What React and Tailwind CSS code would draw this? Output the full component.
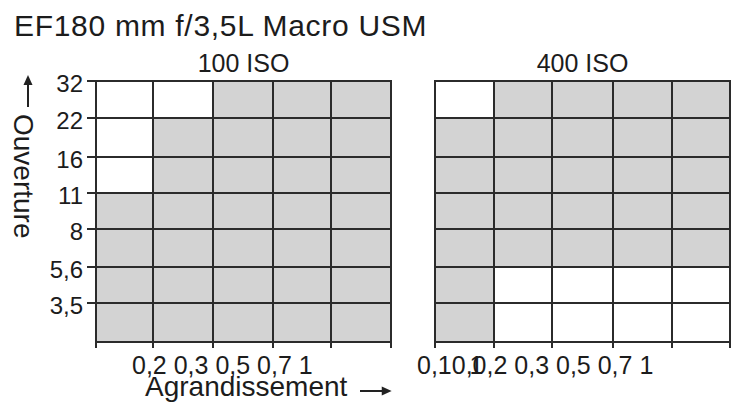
import React from 'react'

// 1 = grey cell (exposure ok), 0 = white
const leftCells = [
  [0, 0, 1, 1, 1],
  [0, 1, 1, 1, 1],
  [0, 1, 1, 1, 1],
  [1, 1, 1, 1, 1],
  [1, 1, 1, 1, 1],
  [1, 1, 1, 1, 1],
  [1, 1, 1, 1, 1],
]

const rightCells = [
  [0, 1, 1, 1, 1],
  [1, 1, 1, 1, 1],
  [1, 1, 1, 1, 1],
  [1, 1, 1, 1, 1],
  [1, 1, 1, 1, 1],
  [1, 0, 0, 0, 0],
  [1, 0, 0, 0, 0],
]

const apertures = ['32', '22', '16', '11', '8', '5,6', '3,5']

const Grid = ({ cells, cols }) => (
  <div className="bg-[#2b2b2b] pt-[2px] px-[2px]">
    <div className={`grid ${cols} grid-rows-[35px_37px_34px_34px_36px_34px_37px_5px] gap-[2px]`}>
      {cells.flat().map((c, i) => (
        <div key={i} className={c ? 'bg-[#d3d3d3]' : 'bg-white'} />
      ))}
      {[0, 1, 2, 3, 4].map((i) => (
        <div key={'t' + i} className="bg-white" />
      ))}
    </div>
  </div>
)

const ArrowUp = () => (
  <svg width="10" height="32" viewBox="0 0 10 32" className="ml-[23px] mt-[24px]">
    <line x1="5" y1="9" x2="5" y2="32" stroke="#222" strokeWidth="2" />
    <polygon points="5,0 9.5,10 0.5,10" fill="#222" />
  </svg>
)

const ArrowRight = () => (
  <svg width="32" height="10" viewBox="0 0 32 10" className="mt-[11px] ml-[13px]">
    <line x1="0" y1="5" x2="23" y2="5" stroke="#222" strokeWidth="2" />
    <polygon points="32,5 22,0.5 22,9.5" fill="#222" />
  </svg>
)

export default function App() {
  return (
    <div className="w-[734px] h-[409px] bg-white text-[#1c1c1c] font-['Liberation_Sans',Arial,sans-serif] overflow-hidden">
      <h1 className="pt-[11px] pl-[14px] text-[30px] leading-[30px] tracking-[0.7px] font-normal">
        EF180 mm f/3,5L Macro USM
      </h1>

      <div className="mt-[10px] flex items-start">
        {/* y axis title */}
        <div className="w-[40px] flex flex-col items-start">
          <ArrowUp />
          <div className="mt-[7px] ml-[9px] text-[28px] leading-[28px] [writing-mode:vertical-rl]">Ouverture</div>
        </div>

        {/* aperture labels + ticks */}
        <div className="w-[55px] mt-[18px] grid grid-rows-[37px_39px_36px_36px_38px_36px_24px]">
          {apertures.map((a) => (
            <div key={a} className="flex justify-end items-start gap-[4px]">
              <span className="text-[24px] leading-[24px] pt-[3px]">{a}</span>
              <span className="mt-[11px] w-[8px] h-[2px] bg-[#2b2b2b]" />
            </div>
          ))}
        </div>

        {/* 100 ISO */}
        <div className="w-[297px] flex flex-col">
          <div className="self-center text-[25px] leading-[25px]">100 ISO</div>
          <div className="mt-[4px]">
            <Grid cells={leftCells} cols="grid-cols-[55px_58px_58px_56px_58px]" />
          </div>
          <div className="mt-[7px] ml-[37px] text-[25px] leading-[20px] whitespace-pre">0,2 0,3 0,5 0,7 1</div>
          <div className="ml-[50px] flex items-start">
            <span className="text-[28px] leading-[24px]">Agrandissement</span>
            <ArrowRight />
          </div>
        </div>

        {/* 400 ISO */}
        <div className="ml-[42px] w-[297px] flex flex-col">
          <div className="self-center text-[25px] leading-[25px]">400 ISO</div>
          <div className="mt-[4px]">
            <Grid cells={rightCells} cols="grid-cols-[57px_56px_59px_57px_56px]" />
          </div>
          <div className="mt-[7px] -ml-[17px] flex text-[25px] leading-[20px] whitespace-pre">
            <span>0,10,</span>
            <span className="relative">
              0<span className="absolute left-[-3px] top-0">1</span>
            </span>
            <span>,2 0,3 0,5 0,7 1</span>
          </div>
        </div>
      </div>
    </div>
  )
}
